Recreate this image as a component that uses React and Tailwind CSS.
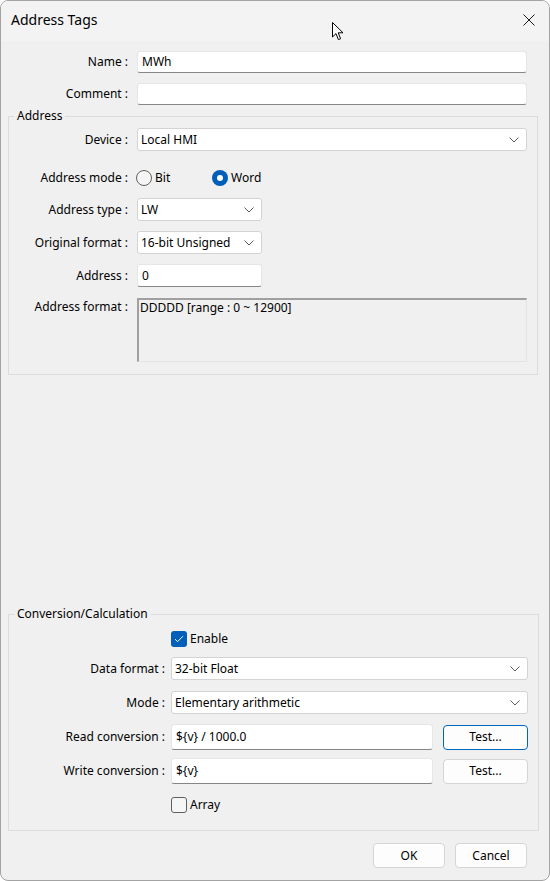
import React from "react";

const Chevron = () => (
  <svg width="10" height="6" viewBox="0 0 10 6" className="shrink-0">
    <polyline points="0.5,0.5 5,5 9.5,0.5" fill="none" stroke="#5c5c5c" strokeWidth="1" />
  </svg>
);

const Select = ({ value, className = "" }) => (
  <div
    className={`flex items-center justify-between bg-white border border-[#d3d3d3] rounded-[3px] pl-[3px] pr-[7px] ${className}`}
  >
    <span>{value}</span>
    <Chevron />
  </div>
);

const Input = ({ value, className = "" }) => (
  <div
    className={`flex items-center bg-white border border-[#e6e6e6] border-b-[#868686] rounded-[3px] pl-[4px] ${className}`}
  >
    {value}
  </div>
);

const Radio = ({ checked, label }) => (
  <div className="flex items-center">
    {checked ? (
      <span className="w-[16px] h-[16px] rounded-full bg-[#005fb8] flex items-center justify-center">
        <span className="w-[6px] h-[6px] rounded-full bg-white" />
      </span>
    ) : (
      <span className="w-[16px] h-[16px] rounded-full border border-[#5f5f5f] bg-[#f6f6f6]" />
    )}
    <span className="ml-[3px]">{label}</span>
  </div>
);

const Checkbox = ({ checked, label }) => (
  <div className="flex items-center h-[16px]">
    {checked ? (
      <span className="w-[16px] h-[16px] rounded-[3px] bg-[#005fb8] flex items-center justify-center">
        <svg width="10" height="8" viewBox="0 0 10 8">
          <polyline points="1,4.2 3.6,6.6 9,1.2" fill="none" stroke="#fff" strokeWidth="1" />
        </svg>
      </span>
    ) : (
      <span className="w-[16px] h-[16px] rounded-[3px] border border-[#5f5f5f] bg-[#f6f6f6]" />
    )}
    <span className="ml-[3px]">{label}</span>
  </div>
);

const Button = ({ children, focused, className = "" }) => (
  <div
    className={`flex items-center justify-center bg-[#fdfdfd] rounded-[4px] border ${
      focused ? "border-[#0067c0]" : "border-[#d5d5d5]"
    } ${className}`}
  >
    {children}
  </div>
);

const Row = ({ label, labelW, gap, className = "", children }) => (
  <div className={`flex items-center ${className}`}>
    <div className={`${labelW} text-right shrink-0`}>{label}</div>
    <div className={`${gap} flex-1 flex items-center h-full`}>{children}</div>
  </div>
);

export default function App() {
  return (
    <div className="w-[550px] h-[881px] bg-white font-['Noto_Sans',sans-serif] text-[12px] leading-[16px] text-[#000]">
      <div className="relative w-full h-full flex flex-col rounded-[8px] border border-[#a3a3a3] bg-[#f0f0f0] overflow-hidden">
        {/* title bar */}
        <div className="h-[40px] shrink-0 flex items-center justify-between bg-[#f3f3f3] pl-[10px] pr-[14px]">
          <span className="text-[14px] leading-[18px] -mt-[2px]">Address Tags</span>
          <svg width="12" height="12" viewBox="0 0 12 12" className="-mt-[2px]">
            <line x1="0.5" y1="0.5" x2="11.5" y2="11.5" stroke="#1a1a1a" strokeWidth="1" />
            <line x1="11.5" y1="0.5" x2="0.5" y2="11.5" stroke="#1a1a1a" strokeWidth="1" />
          </svg>
        </div>

        {/* cursor */}
        <svg width="13" height="19" viewBox="0 0 13 19" className="absolute left-[331px] top-[21px]">
          <path d="M0.5,0.5 L0.5,15 L4,11.6 L6.4,17.6 L8.6,16.7 L6.2,10.8 L11,10.8 Z" fill="#fff" stroke="#000" strokeWidth="1" strokeLinejoin="round" />
        </svg>

        <div className="flex-1 flex flex-col pl-[7px] pr-[11px] pb-[12px]">
          <Row label="Name :" labelW="w-[120px]" gap="ml-[9px]" className="mt-[10px] h-[22px] mr-[11px]">
            <Input value="MWh" className="w-full h-[22px]" />
          </Row>
          <Row label="Comment :" labelW="w-[120px]" gap="ml-[9px]" className="mt-[10px] h-[22px] mr-[11px]">
            <Input value="" className="w-full h-[22px]" />
          </Row>

          <fieldset className="mt-[3px] border border-[#dcdcdc] pr-[10px] pb-[12px]">
            <legend className="ml-[5px] px-[3px] leading-[16px]">Address</legend>
            <Row label="Device :" labelW="w-[119px]" gap="ml-[9px]" className="mt-[4px] h-[23px]">
              <Select value="Local HMI" className="w-full h-[23px]" />
            </Row>
            <Row label="Address mode :" labelW="w-[119px]" gap="ml-[8px]" className="mt-[19px] h-[16px]">
              <div className="w-[76px]">
                <Radio label="Bit" />
              </div>
              <Radio checked label="Word" />
            </Row>
            <Row label="Address type :" labelW="w-[119px]" gap="ml-[9px]" className="mt-[12px] h-[23px]">
              <Select value="LW" className="w-[125px] h-[23px]" />
            </Row>
            <Row label="Original format :" labelW="w-[119px]" gap="ml-[9px]" className="mt-[10px] h-[23px]">
              <Select value="16-bit Unsigned" className="w-[125px] h-[23px]" />
            </Row>
            <Row label="Address :" labelW="w-[119px]" gap="ml-[9px]" className="mt-[10px] h-[23px]">
              <Input value="0" className="w-[125px] h-[23px]" />
            </Row>
            <div className="flex items-start mt-[11px] h-[64px]">
              <div className="w-[119px] text-right shrink-0 pt-[1px]">Address format :</div>
              <div className="ml-[9px] flex-1 h-full border-t-2 border-l-2 border-t-[#a0a0a0] border-l-[#a0a0a0] border-r border-b border-r-[#e3e3e3] border-b-[#e3e3e3] bg-[#f0f0f0] pl-[1px]">
                DDDDD [range : 0 ~ 12900]
              </div>
            </div>
          </fieldset>

          <fieldset className="mt-auto border border-[#dcdcdc] pr-[10px] pb-[17px]">
            <legend className="ml-[5px] px-[3px] leading-[16px]">Conversion/Calculation</legend>
            <div className="pl-[162px] pt-[9px]">
              <Checkbox checked label="Enable" />
            </div>
            <Row label="Data format :" labelW="w-[156px]" gap="ml-[6px]" className="mt-[10px] h-[23px]">
              <Select value="32-bit Float" className="w-full h-[23px]" />
            </Row>
            <Row label="Mode :" labelW="w-[156px]" gap="ml-[6px]" className="mt-[11px] h-[23px]">
              <Select value="Elementary arithmetic" className="w-full h-[23px]" />
            </Row>
            <Row label="Read conversion :" labelW="w-[156px]" gap="ml-[6px]" className="mt-[10px] h-[26px]">
              <Input value="${v} / 1000.0" className="w-[262px] h-[26px]" />
              <Button focused className="ml-[10px] w-[85px] h-[25px]">Test...</Button>
            </Row>
            <Row label="Write conversion :" labelW="w-[156px]" gap="ml-[6px]" className="mt-[8px] h-[26px]">
              <Input value="${v}" className="w-[262px] h-[26px]" />
              <Button className="ml-[10px] w-[85px] h-[25px]">Test...</Button>
            </Row>
            <div className="pl-[162px] mt-[13px]">
              <Checkbox label="Array" />
            </div>
          </fieldset>

          <div className="mt-[12px] flex justify-end gap-[10px] pr-[11px]">
            <Button className="w-[72px] h-[25px]">OK</Button>
            <Button className="w-[72px] h-[25px]">Cancel</Button>
          </div>
        </div>
      </div>
    </div>
  );
}
